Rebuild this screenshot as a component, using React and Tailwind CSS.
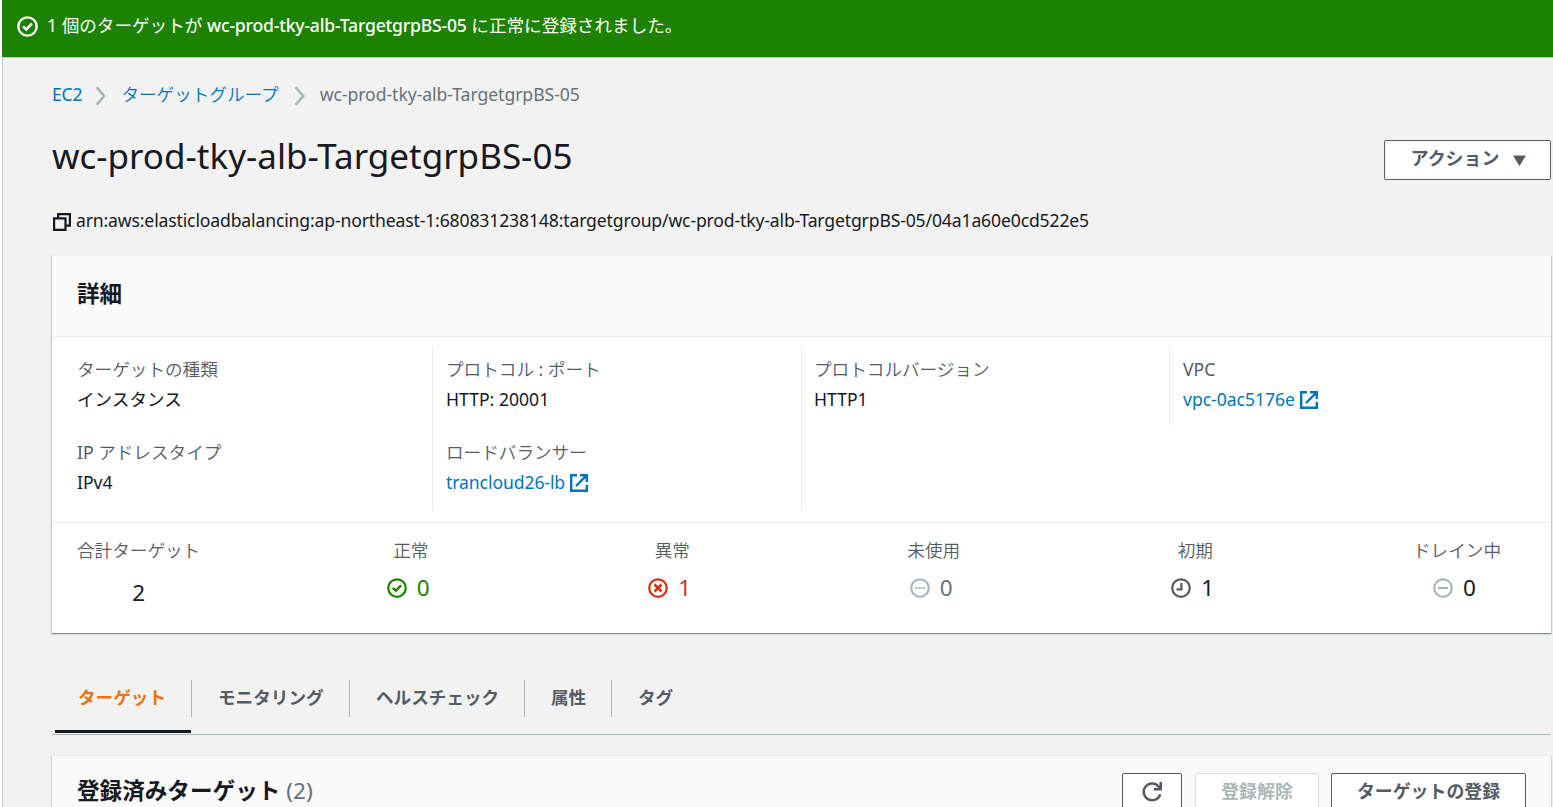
import React from 'react';

const stroke = { fill: 'none', stroke: 'currentColor', strokeWidth: 2 };

function CircleCheck({ className }) {
  return (
    <svg viewBox="0 0 16 16" className={className} {...stroke}>
      <circle cx="8" cy="8" r="7" strokeWidth="1.8" />
      <path d="M4.6 7.9 7.1 10.2 11.3 5.8" />
    </svg>
  );
}

function CircleX({ className }) {
  return (
    <svg viewBox="0 0 16 16" className={className} {...stroke}>
      <circle cx="8" cy="8" r="7" strokeWidth="1.8" />
      <path d="m5.2 5.2 5.6 5.6M10.8 5.2l-5.6 5.6" />
    </svg>
  );
}

function CircleDots({ className }) {
  return (
    <svg viewBox="0 0 16 16" className={className} {...stroke}>
      <circle cx="8" cy="8" r="7" strokeWidth="1.8" />
      <path d="M4.2 8h1.9M7.1 8h1.9M10 8h1.9" strokeWidth="1.7" />
    </svg>
  );
}

function CircleClock({ className }) {
  return (
    <svg viewBox="0 0 16 16" className={className} {...stroke}>
      <circle cx="8" cy="8" r="7" strokeWidth="1.8" />
      <path d="M8.3 4v5H4.4" strokeWidth="1.8" />
    </svg>
  );
}

function CircleMinus({ className }) {
  return (
    <svg viewBox="0 0 16 16" className={className} {...stroke}>
      <circle cx="8" cy="8" r="7" strokeWidth="1.8" />
      <path d="M4 8h8" strokeWidth="1.8" />
    </svg>
  );
}

function CopyIcon() {
  return (
    <svg viewBox="0 0 18 18" className="h-[18px] w-[18px] shrink-0" {...stroke} strokeWidth="2.2">
      <path d="M1.1 5.3h11.4v11.6H1.1z" />
      <path d="M5.2 5V1.1h11.7v11.6h-4" />
    </svg>
  );
}

function ExternalIcon() {
  return (
    <svg viewBox="0 0 18 18" className="mt-0.5 ml-[5px] h-[18px] w-[18px] shrink-0" {...stroke} strokeWidth="2.4">
      <path d="M7 1.2H1.2v15.6h15.6V11" />
      <path d="M10 1.2h6.8V8M16.4 1.6 6 12" />
    </svg>
  );
}

function Chevron({ className }) {
  return (
    <svg viewBox="0 0 12 20" className={'h-5 w-3 text-[#aab7b8] ' + className} {...stroke} strokeWidth="2.6">
      <path d="m1.6 1.2 7.6 8.8-7.6 8.8" />
    </svg>
  );
}

function RefreshIcon() {
  return (
    <svg viewBox="0 0 20 20" className="h-5 w-5" {...stroke} strokeWidth="2.5">
      <path d="M18.2 12.3A8.4 8.4 0 1 1 16.4 4.3L18.2 6.6" />
      <path d="M18.8 0v7.2h-7" />
    </svg>
  );
}

function Field({ label, children, className = '' }) {
  return (
    <div className={'h-[83px] pt-[9px] ' + className}>
      <div className="h-[30px] leading-7 font-[350] text-[#545b64]">{label}</div>
      <div className="flex h-7 items-center leading-7">{children}</div>
    </div>
  );
}

function Stat({ label, children, className = '' }) {
  return (
    <div className={'flex flex-col items-center ' + className}>
      <div className="h-[37px] leading-[27px] font-[350] text-[#545b64]">{label}</div>
      <div className="flex h-7 items-center gap-2.5 text-[22.5px] leading-7">{children}</div>
    </div>
  );
}

const icon = 'h-5 w-5';

export default function App() {
  return (
    <div className="h-[807px] w-[1553px] overflow-hidden bg-white pl-0.5 font-['Noto_Sans','Noto_Sans_CJK_JP',sans-serif] text-[17.6px] text-[#16191f]">
      <header className="flex h-[57px] items-start bg-[#1d8102] pt-[11px] pl-[15px] text-white">
        <CircleCheck className="mt-[5px] h-[21px] w-[21px] shrink-0" />
        <p className="ml-[9px] leading-7 whitespace-pre">
          1 個のターゲットが <span className="font-medium tracking-[-0.2px]">wc-prod-tky-alb-TargetgrpBS-05</span> に正常に登録されました。
        </p>
      </header>
      <main className="h-[750px] border-t border-l border-[#c3c7c9] bg-[#f2f2f2] pr-0.5 pl-[49px]">
        <nav className="flex h-[74px] items-center pb-0.5 leading-7">
          <a className="tracking-[-0.2px] text-[#0073bb]">EC2</a>
          <Chevron className="mt-1 mr-[14px] ml-[13px]" />
          <a className="font-[350] text-[#0073bb]">ターゲットグループ</a>
          <Chevron className="mt-1 mr-[14px] ml-[15px]" />
          <span className="tracking-[-0.05px] text-[#687078]">wc-prod-tky-alb-TargetgrpBS-05</span>
        </nav>
        <div className="flex h-[60px] items-start justify-between">
          <h1 className="text-[35px] leading-[48px]">wc-prod-tky-alb-TargetgrpBS-05</h1>
          <button className="mt-2 flex h-10 w-[167px] items-center justify-center gap-[14px] rounded-[2px] border border-[#545b64] bg-white pb-1 pl-0.5 text-[17.9px] font-bold text-[#545b64]">
            アクション
            <svg viewBox="0 0 13 11" className="mt-1 h-[11px] w-[13px] fill-current"><path d="M0 .5h13L6.5 11z" /></svg>
          </button>
        </div>
        <div className="flex h-[63px] items-center gap-[5px] pl-px pb-1">
          <CopyIcon />
          <span className="-mt-0.5 tracking-[-0.15px]">arn:aws:elasticloadbalancing:ap-northeast-1:680831238148:targetgroup/wc-prod-tky-alb-TargetgrpBS-05/04a1a60e0cd522e5</span>
        </div>

        <section className="h-[378px] bg-white shadow-[0_1px_1px_0_#7b8f8f,-1px_1px_1px_0_#cfd6d6,1px_1px_1px_0_#cfd6d6]">
          <div className="h-[82px] border-t border-b border-[#eaeded] bg-[#fafafa] pt-5 pl-[25px]">
            <h2 className="text-[22.5px] leading-9 font-bold">詳細</h2>
          </div>
          <div className="grid h-[185px] grid-cols-[380px_369px_368px_1fr] pt-[9px]">
            <div className="h-[165px] pl-[25px]">
              <Field label="ターゲットの種類">インスタンス</Field>
              <Field label={<><span className="font-normal">IP</span> アドレスタイプ</>}>IPv4</Field>
            </div>
            <div className="h-[165px] border-l border-[#eaeded] pl-[13px]">
              <Field label={<>プロトコル<span className="font-normal"> : </span>ポート</>}>HTTP: 20001</Field>
              <Field label="ロードバランサー">
                <a className="tracking-[-0.1px] text-[#0073bb]">trancloud26-lb</a>
                <span className="flex text-[#0073bb]"><ExternalIcon /></span>
              </Field>
            </div>
            <div className="h-[165px] border-l border-[#eaeded] pl-3">
              <Field label="プロトコルバージョン">HTTP1</Field>
            </div>
            <div className="h-[82px] border-l border-[#eaeded] pl-[13px]">
              <Field label={<span className="font-normal">VPC</span>}>
                <a className="tracking-[-0.05px] text-[#0073bb]">vpc-0ac5176e</a>
                <span className="flex text-[#0073bb]"><ExternalIcon /></span>
              </Field>
            </div>
          </div>
          <div className="grid h-[111px] grid-cols-[203px_261.5px_261.5px_261.5px_261.5px_1fr] border-t border-[#eaeded] pt-[14px] pr-[50px] pl-[25px]">
            <Stat label="合計ターゲット" className="justify-self-start"><span className="pt-[9px]">2</span></Stat>
            <Stat label="正常"><span className="mr-[5px] flex items-center gap-2.5 text-[#1d8102]"><CircleCheck className={icon} />0</span></Stat>
            <Stat label="異常"><span className="mr-[5px] flex items-center gap-2.5 text-[#d13212]"><CircleX className={icon} />1</span></Stat>
            <Stat label="未使用"><span className="mr-[5px] flex items-center gap-2.5 text-[#687078]"><CircleDots className="h-5 w-5 text-[#aab7b8]" />0</span></Stat>
            <Stat label="初期"><span className="mr-[5px] flex items-center gap-2.5"><CircleClock className="h-5 w-5 text-[#545b64]" />1</span></Stat>
            <Stat label="ドレイン中" className="justify-self-end"><span className="mr-[5px] flex items-center gap-2.5"><CircleMinus className="h-5 w-5 text-[#aab7b8]" />0</span></Stat>
          </div>
        </section>

        <div className="mt-[47px] flex h-[55px] border-b border-[#aab7b8] pl-[3px] font-bold text-[#545b64]">
          <div className="h-[53px] w-[136px] border-b-[3px] border-[#16191f] pl-[23px] leading-[34px] text-[#ec7211]">ターゲット</div>
          <div className="h-[37px] w-[158px] border-l border-[#aab7b8] pl-[26px] leading-[34px]">モニタリング</div>
          <div className="h-[37px] w-[175px] border-l border-[#aab7b8] pl-[26px] leading-[34px]">ヘルスチェック</div>
          <div className="h-[37px] w-[87px] border-l border-[#aab7b8] pl-[26px] leading-[34px]">属性</div>
          <div className="h-[37px] border-l border-[#aab7b8] pl-[26px] leading-[34px]">タグ</div>
        </div>

        <section className="mt-5 flex h-[80px] items-start border-t border-[#eaeded] bg-[#fafafa] pt-[17px] pr-[25px] pl-[25px] shadow-[-1px_1px_1px_0_#cfd6d6,1px_1px_1px_0_#cfd6d6]">
          <h2 className="flex-1 text-[22.6px] leading-9 font-bold">登録済みターゲット <span className="font-normal text-[#687078]">(2)</span></h2>
          <button className="flex h-10 w-[60px] items-center justify-center rounded-[2px] border border-[#545b64] bg-white pb-0.5 text-[#545b64]"><RefreshIcon /></button>
          <button className="ml-[13px] h-10 w-[124px] rounded-[2px] border border-[#d5dbdb] bg-white pb-1 text-[17.9px] font-bold text-[#aab7b8]">登録解除</button>
          <button className="ml-3 h-10 w-[195px] rounded-[2px] border border-[#545b64] bg-white pb-1 text-[17.9px] font-bold text-[#545b64]">ターゲットの登録</button>
        </section>
      </main>
    </div>
  );
}
